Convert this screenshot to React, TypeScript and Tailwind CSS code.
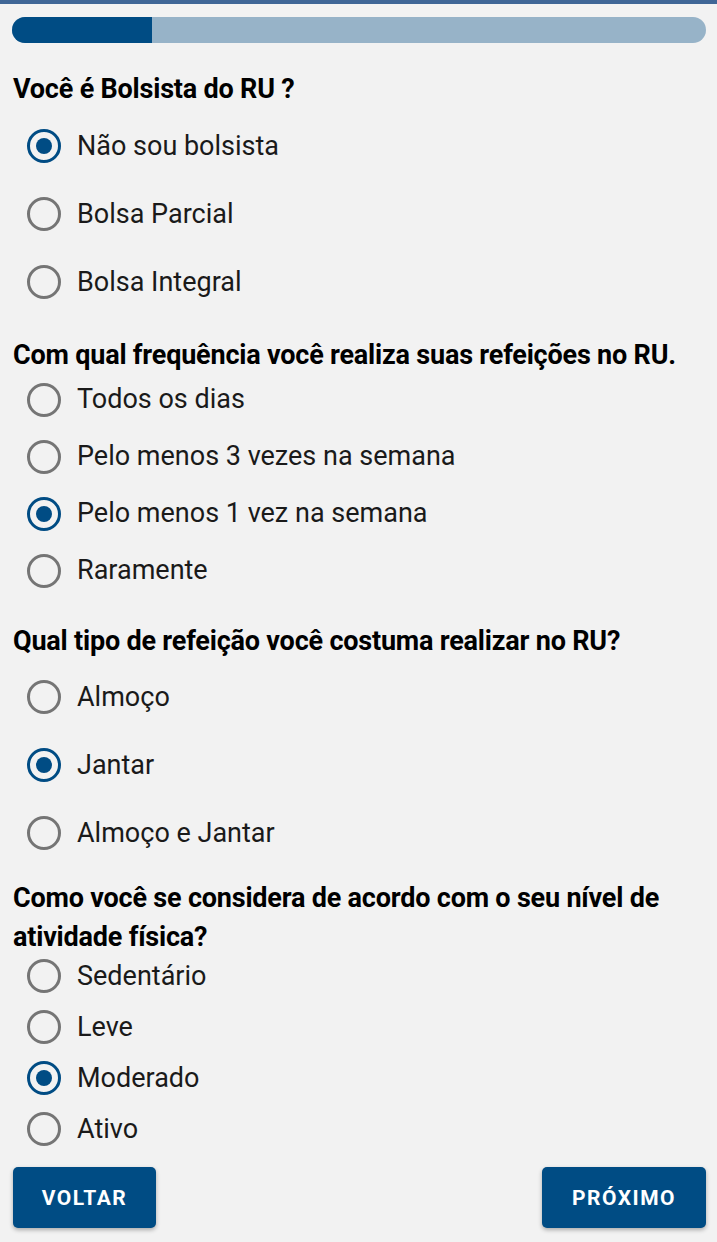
import React, { useState } from 'react';

type Question = {
  title: string;
  options: string[];
  selected: number;
  headingClass: string;
  listClass: string;
  rowClass: string;
};

const questions: Question[] = [
  {
    title: 'Você é Bolsista do RU ?',
    options: ['Não sou bolsista', 'Bolsa Parcial', 'Bolsa Integral'],
    selected: 0,
    headingClass: 'mt-[30px] leading-[32px]',
    listClass: 'mt-[7px]',
    rowClass: 'h-[68px]',
  },
  {
    title: 'Com qual frequência você realiza suas refeições no RU.',
    options: ['Todos os dias', 'Pelo menos 3 vezes na semana', 'Pelo menos 1 vez na semana', 'Raramente'],
    selected: 2,
    headingClass: 'mt-[24px] leading-[30px]',
    listClass: 'mt-[1px]',
    rowClass: 'h-[57px]',
  },
  {
    title: 'Qual tipo de refeição você costuma realizar no RU?',
    options: ['Almoço', 'Jantar', 'Almoço e Jantar'],
    selected: 1,
    headingClass: 'mt-[26px] leading-[32px]',
    listClass: 'mt-[6px]',
    rowClass: 'h-[68px]',
  },
  {
    title: 'Como você se considera de acordo com o seu nível de atividade física?',
    options: ['Sedentário', 'Leve', 'Moderado', 'Ativo'],
    selected: 2,
    headingClass: 'mt-[12px] leading-[39px]',
    listClass: 'mt-[2px] flex flex-col gap-[17px]',
    rowClass: 'h-[34px]',
  },
];

const Radio: React.FC<{ checked: boolean }> = ({ checked }) => (
  <span
    className={
      checked
        ? 'flex items-center justify-center w-[34px] h-[34px] rounded-full border-[3px] border-[#004c84]'
        : 'flex items-center justify-center w-[34px] h-[34px] rounded-full border-[3px] border-[#757575]'
    }
  >
    {checked && <span className="w-[16px] h-[16px] rounded-full bg-[#004c84]" />}
  </span>
);

export default function App() {
  const [answers, setAnswers] = useState(questions.map((q) => q.selected));

  return (
    <div
      className="min-h-[1242px] bg-[#f2f2f2] border-t-4 border-[#3f6696]"
      style={{ fontFamily: 'Roboto, "Noto Sans", sans-serif' }}
    >
      <div className="pl-[12px] pr-[11px] pt-[13px]">
        {/* progress */}
        <div className="h-[26px] rounded-full bg-[#97b3c8] overflow-hidden">
          <div className="h-full w-[140px] bg-[#004c84]" />
        </div>

        {questions.map((q, qi) => (
          <section key={q.title}>
            <h2 className={`pl-[1px] text-[27px] font-bold text-black tracking-[-0.2px] ${q.headingClass}`}>{q.title}</h2>
            <div className={q.listClass}>
              {q.options.map((opt, oi) => (
                <label
                  key={opt}
                  className={`flex items-center pl-[15px] cursor-pointer ${q.rowClass}`}
                  onClick={() => setAnswers((a) => a.map((v, i) => (i === qi ? oi : v)))}
                >
                  <Radio checked={answers[qi] === oi} />
                  <span className="ml-[16px] text-[27px] text-[#1a1a1a]">{opt}</span>
                </label>
              ))}
            </div>
          </section>
        ))}

        {/* buttons */}
        <div className="flex justify-between mt-[21px] pl-[1px]">
          <button className="w-[143px] h-[61px] pt-[3px] rounded-[5px] bg-[#004c84] text-white font-bold text-[21px] tracking-[1.5px] shadow-[0_2px_4px_rgba(0,0,0,0.3)]">
            VOLTAR
          </button>
          <button className="w-[164px] h-[61px] pt-[3px] rounded-[5px] bg-[#004c84] text-white font-bold text-[21px] tracking-[1.5px] shadow-[0_2px_4px_rgba(0,0,0,0.3)]">
            PRÓXIMO
          </button>
        </div>
      </div>
    </div>
  );
}
